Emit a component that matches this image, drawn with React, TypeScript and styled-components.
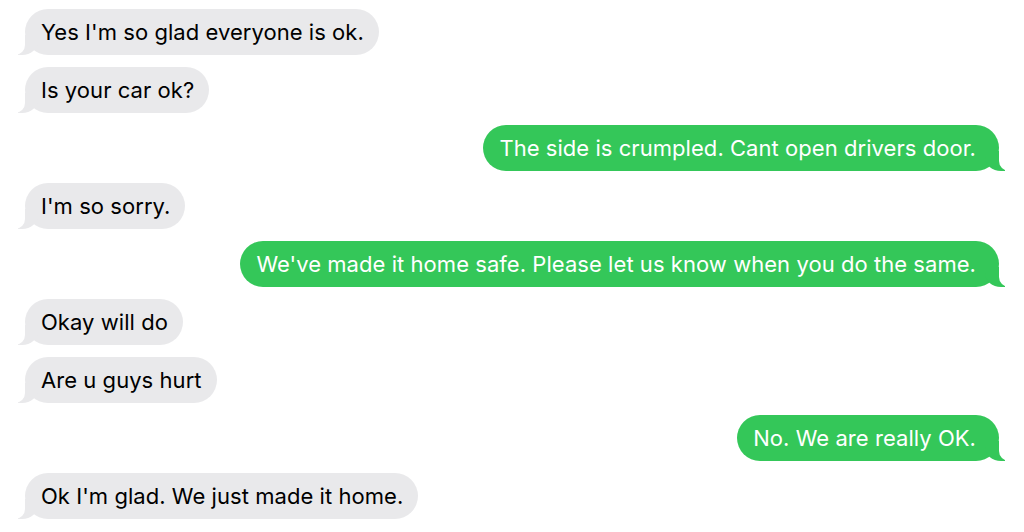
import React from "react";
import styled, { createGlobalStyle, css } from "styled-components";

// ---------- Types ----------
interface Message {
  id: number;
  text: string;
  fromMe: boolean;
}

// ---------- Data ----------
const messages: Message[] = [
  { id: 1, text: "Yes I'm so glad everyone is ok.", fromMe: false },
  { id: 2, text: "Is your car ok?", fromMe: false },
  { id: 3, text: "The side is crumpled. Cant open drivers door.", fromMe: true },
  { id: 4, text: "I'm so sorry.", fromMe: false },
  { id: 5, text: "We've made it home safe. Please let us know when you do the same.", fromMe: true },
  { id: 6, text: "Okay will do", fromMe: false },
  { id: 7, text: "Are u guys hurt", fromMe: false },
  { id: 8, text: "No. We are really OK.", fromMe: true },
  { id: 9, text: "Ok I'm glad. We just made it home.", fromMe: false },
];

const GREY = "#e9e9eb";
const GREEN = "#34c759";

// ---------- Styled Components ----------
const GlobalStyle = createGlobalStyle`
  html, body {
    margin: 0;
    padding: 0;
    background: #ffffff;
  }
  body {
    font-family: Inter, "Open Sans", "Liberation Sans", sans-serif;
    -webkit-font-smoothing: antialiased;
  }
`;

const Thread = styled.div`
  display: flex;
  flex-direction: column;
  gap: 12px;
  padding: 9px 25px 0 25px;
  width: 1024px;
  height: 532px;
  box-sizing: border-box;
  overflow: hidden;
`;

const Bubble = styled.div<{ $fromMe: boolean }>`
  position: relative;
  max-width: 820px;
  height: 46px;
  box-sizing: border-box;
  display: flex;
  align-items: center;
  border-radius: 23px;
  font-size: 22px;
  letter-spacing: 0.05px;
  white-space: nowrap;

  &::before,
  &::after {
    content: "";
    position: absolute;
    bottom: 0;
    height: 20px;
  }

  ${({ $fromMe }) =>
    $fromMe
      ? css`
          align-self: flex-end;
          padding: 0 23px 0 16px;
          background: ${GREEN};
          color: #ffffff;

          &::before {
            right: -6px;
            width: 20px;
            background: ${GREEN};
            border-bottom-left-radius: 16px 14px;
          }
          &::after {
            right: -26px;
            width: 26px;
            background: #ffffff;
            border-bottom-left-radius: 10px;
          }
        `
      : css`
          align-self: flex-start;
          padding: 0 15px 0 16px;
          background: ${GREY};
          color: #000000;

          &::before {
            left: -7px;
            width: 20px;
            background: ${GREY};
            border-bottom-right-radius: 16px 14px;
          }
          &::after {
            left: -26px;
            width: 26px;
            background: #ffffff;
            border-bottom-right-radius: 10px;
          }
        `}
`;

const Text = styled.span`
  position: relative;
  z-index: 1;
`;

// ---------- Component ----------
const App: React.FC = () => {
  return (
    <>
      <GlobalStyle />
      <Thread>
        {messages.map((m) => (
          <Bubble key={m.id} $fromMe={m.fromMe}>
            <Text>{m.text}</Text>
          </Bubble>
        ))}
      </Thread>
    </>
  );
};

export default App;
